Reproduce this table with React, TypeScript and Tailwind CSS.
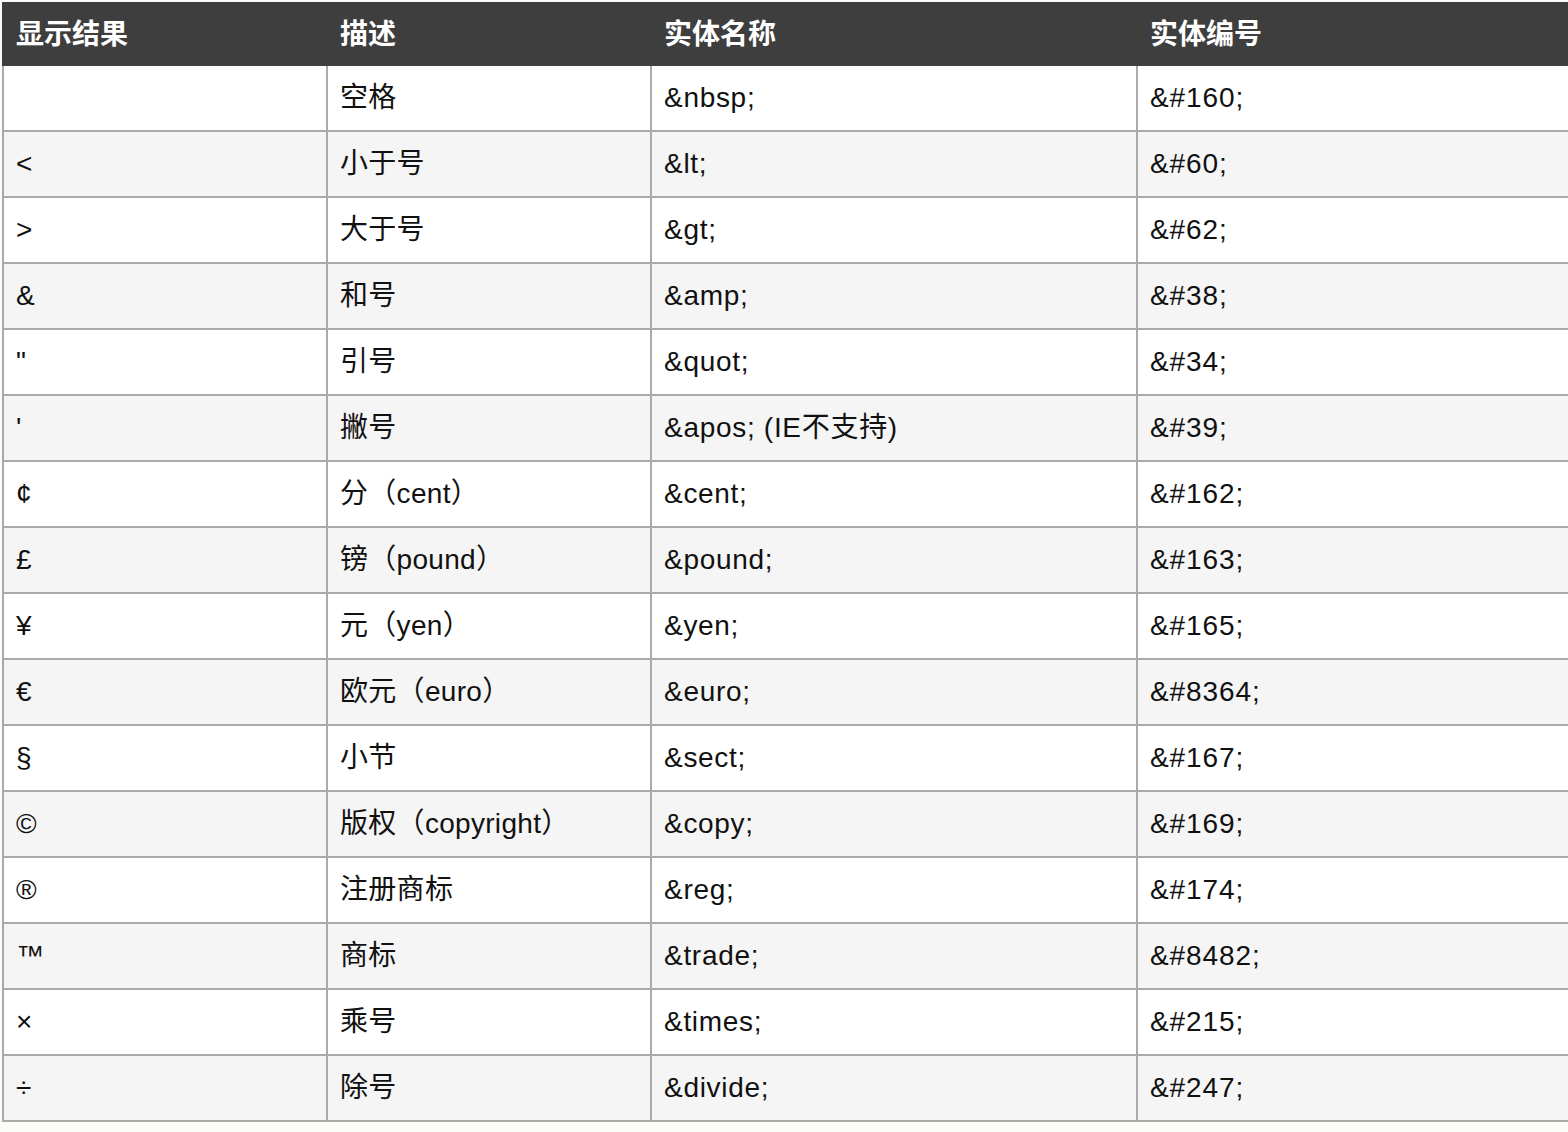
import React from "react";

const rows: [string, string, string, string][] = [
  ["", "空格", "&nbsp;", "&#160;"],
  ["<", "小于号", "&lt;", "&#60;"],
  [">", "大于号", "&gt;", "&#62;"],
  ["&", "和号", "&amp;", "&#38;"],
  ['"', "引号", "&quot;", "&#34;"],
  ["'", "撇号", "&apos; (IE不支持)", "&#39;"],
  ["¢", "分（cent）", "&cent;", "&#162;"],
  ["£", "镑（pound）", "&pound;", "&#163;"],
  ["¥", "元（yen）", "&yen;", "&#165;"],
  ["€", "欧元（euro）", "&euro;", "&#8364;"],
  ["§", "小节", "&sect;", "&#167;"],
  ["©", "版权（copyright）", "&copy;", "&#169;"],
  ["®", "注册商标", "&reg;", "&#174;"],
  ["™", "商标", "&trade;", "&#8482;"],
  ["×", "乘号", "&times;", "&#215;"],
  ["÷", "除号", "&divide;", "&#247;"],
];

const font = {
  fontFamily: '"Liberation Sans", "Noto Sans CJK SC", sans-serif',
};

export default function App() {
  return (
    <div
      className="w-[1568px] h-[1132px] overflow-hidden bg-[#fbfbf7] pt-[2px] pl-[2px]"
      style={font}
    >
      <div className="w-[1600px] bg-white">
        <div className="flex h-[64px] bg-[#3e3e3e] text-white text-[28px] font-bold items-center pt-[2px]">
          <div className="w-[324px] pl-[14px]">显示结果</div>
          <div className="w-[324px] pl-[14px]">描述</div>
          <div className="w-[486px] pl-[14px]">实体名称</div>
          <div className="flex-1 pl-[14px]">实体编号</div>
        </div>
        {rows.map((r, i) => (
          <div
            key={i}
            className={`flex h-[66px] border-b-2 border-[#aaaaaa] text-[28px] text-[#111111] ${
              i % 2 === 1 ? "bg-[#f5f5f5]" : "bg-white"
            }`}
          >
            <div className="w-[324px] border-l-2 border-[#aaaaaa] pl-[12px] flex items-center">
              {r[0]}
            </div>
            <div className="w-[324px] border-l-2 border-[#aaaaaa] pl-[12px] flex items-center tracking-[0.3px]">
              {r[1]}
            </div>
            <div className="w-[486px] border-l-2 border-[#aaaaaa] pl-[12px] flex items-center tracking-[0.7px]">
              {r[2]}
            </div>
            <div className="flex-1 border-l-2 border-[#aaaaaa] pl-[12px] flex items-center tracking-[0.9px]">
              {r[3]}
            </div>
          </div>
        ))}
      </div>
    </div>
  );
}
